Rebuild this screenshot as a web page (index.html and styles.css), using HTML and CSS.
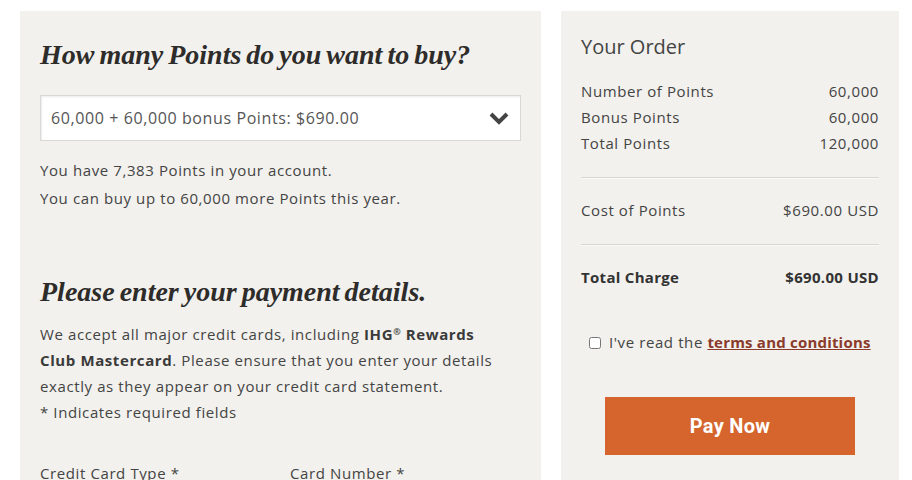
FILE: index.html
```html
<!DOCTYPE html>
<html lang="en">
<head>
    <meta charset="UTF-8">
    <meta name="viewport" content="width=device-width, initial-scale=1.0">
    <title>Buy Points</title>
    <link rel="stylesheet" href="styles.css">
</head>
<body>
    <div class="page">
        <!-- Left column: points selection and payment -->
        <div class="panel main-panel">
            <h2 class="title">How many Points do you want to buy?</h2>

            <div class="select-box">
                <span>60,000 + 60,000 bonus Points: $690.00</span>
                <svg class="chevron" width="20" height="14" viewBox="0 0 20 14">
                    <path d="M2 3 L10 11 L18 3" fill="none" stroke="#444" stroke-width="4"/>
                </svg>
            </div>

            <div class="info">
                <p>You have 7,383 Points in your account.</p>
                <p>You can buy up to 60,000 more Points this year.</p>
            </div>

            <h2 class="title second">Please enter your payment details.</h2>

            <p class="intro">
                We accept all major credit cards, including <b>IHG<sup>®</sup> Rewards Club Mastercard</b>. Please ensure that you enter your details exactly as they appear on your credit card statement.<br>
                * Indicates required fields
            </p>

            <div class="fields">
                <label>Credit Card Type *</label>
                <label>Card Number *</label>
            </div>
        </div>

        <!-- Right column: order summary -->
        <div class="panel order-panel">
            <h3 class="order-title">Your Order</h3>

            <div class="rows">
                <div class="row"><span>Number of Points</span><span>60,000</span></div>
                <div class="row"><span>Bonus Points</span><span>60,000</span></div>
                <div class="row"><span>Total Points</span><span>120,000</span></div>
            </div>

            <div class="rows divided">
                <div class="row"><span>Cost of Points</span><span>$690.00 USD</span></div>
            </div>

            <div class="rows divided">
                <div class="row total"><span>Total Charge</span><span>$690.00 USD</span></div>
            </div>

            <label class="terms">
                <input type="checkbox"> I've read the <a href="#">terms and conditions</a>
            </label>

            <button class="pay" type="submit">Pay Now</button>
        </div>
    </div>
</body>
</html>
```

FILE: styles.css
```css
body {
    margin: 0;
    padding: 0;
    background: #ffffff;
    font-family: 'Open Sans', sans-serif;
    font-size: 15px;
    letter-spacing: 0.6px;
    color: #444;
}

.page {
    display: flex;
    gap: 20px;
    padding: 11px 13px 0 20px;
    height: 469px;
    overflow: hidden;
}

.panel {
    background: #f2f1ed;
    box-sizing: border-box;
}

.main-panel {
    width: 521px;
    padding: 28px 20px 0 20px;
}

.order-panel {
    width: 338px;
    padding: 22px 20px 0 20px;
}

/* Serif italic headings */
.title {
    margin: 0;
    font-family: 'Liberation Serif', serif;
    font-style: italic;
    font-weight: bold;
    font-size: 28px;
    line-height: 32px;
    color: #2e2c2a;
    letter-spacing: 0;
    word-spacing: -2px;
}

.title.second {
    margin-top: 64px;
}

.select-box {
    margin-top: 24px;
    height: 46px;
    box-sizing: border-box;
    border: 1px solid #d9d8d4;
    background: #fff;
    box-shadow: inset 1px 1px 2px rgba(0, 0, 0, 0.08);
    display: flex;
    align-items: center;
    justify-content: space-between;
    padding: 0 11px 0 10px;
    font-size: 16px;
    color: #555;
}

.info {
    margin-top: 15px;
}

.info p {
    margin: 0;
    line-height: 28px;
}

.intro {
    margin: 13px 0 0 0;
    max-width: 460px;
    line-height: 26px;
}

.intro b {
    color: #3a3a3a;
}

.intro sup {
    font-size: 9px;
    line-height: 0;
    vertical-align: 5px;
}

.fields {
    margin-top: 35px;
    display: grid;
    grid-template-columns: 250px 1fr;
    line-height: 26px;
}

.order-title {
    margin: 0;
    font-weight: normal;
    font-size: 20px;
    line-height: 28px;
    letter-spacing: 0;
    color: #444;
}

.rows {
    margin-top: 17px;
}

.rows.divided {
    margin-top: 21px;
    padding-top: 19px;
    border-top: 1px solid #d8d6d1;
    box-shadow: inset 0 1px 0 #fbfaf8;
}

.row {
    display: flex;
    justify-content: space-between;
    line-height: 26px;
}

.row.total {
    font-weight: bold;
    letter-spacing: 0.3px;
    color: #333;
}

.terms {
    display: block;
    margin-top: 39px;
    text-align: center;
    line-height: 26px;
    white-space: nowrap;
}

.terms input {
    margin: 0 3px 0 0;
    width: 12px;
    height: 12px;
    vertical-align: -1px;
}

.terms a {
    color: #8a3b2b;
    font-weight: bold;
    letter-spacing: 0.2px;
    text-decoration: underline;
}

.pay {
    display: block;
    margin: 42px auto 0 auto;
    width: 250px;
    height: 58px;
    border: none;
    background: #d5642d;
    color: #fff;
    font-family: 'Roboto', sans-serif;
    font-weight: bold;
    font-size: 20px;
    letter-spacing: 0.3px;
    cursor: pointer;
}
```
